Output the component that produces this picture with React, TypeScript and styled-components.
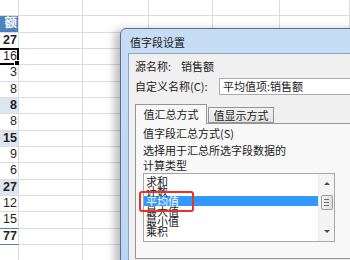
import styled, { createGlobalStyle } from "styled-components";

const GlobalStyle = createGlobalStyle`
  html, body {
    margin: 0;
    padding: 0;
    width: 350px;
    height: 260px;
    overflow: hidden;
    background: #ffffff;
  }
  * {
    box-sizing: border-box;
  }
`;

const Page = styled.div`
  position: relative;
  width: 350px;
  height: 260px;
  overflow: hidden;
  font-family: "Noto Sans CJK SC", "Noto Sans", sans-serif;
`;

const Sheet = styled.div`
  display: flex;
  flex-direction: column;
`;

const SheetRow = styled.div`
  display: grid;
  grid-template-columns: 19px 64px 66px 64px 67px 70px;
  height: 16.33px;
`;

const Cell = styled.div<{ $shade?: boolean; $head?: boolean; $bold?: boolean; $line?: boolean }>`
  position: relative;
  border-right: 1px solid #dadcdf;
  border-bottom: 1px solid ${(p) => (p.$line ? "#4f81bd" : "#dadcdf")};
  background: ${(p) => (p.$head ? "#4f81bd" : p.$shade ? "#dce6f1" : "#ffffff")};
  color: ${(p) => (p.$head ? "#ffffff" : "#1f1f1f")};
  font-family: "Liberation Sans", "Noto Sans CJK SC", sans-serif;
  font-size: 12.5px;
  font-weight: ${(p) => (p.$bold || p.$head ? 700 : 400)};
  line-height: 15px;
  text-align: right;
  padding-right: 1px;
  white-space: nowrap;
  direction: rtl;
`;

const Selection = styled.div`
  position: absolute;
  left: -2px;
  top: -1px;
  right: -1px;
  bottom: -1px;
  border: 2px solid #000000;
  &::after {
    content: "";
    position: absolute;
    right: -4px;
    bottom: -4px;
    width: 5px;
    height: 5px;
    background: #000000;
    border: 1px solid #ffffff;
  }
`;

const Dialog = styled.div`
  position: absolute;
  left: 120px;
  top: 28px;
  width: 250px;
  height: 240px;
  border: 1px solid #5d6f88;
  border-radius: 6px 0 0 0;
  background: linear-gradient(#c7ddf6, #bcd5f2);
  box-shadow: -5px 2px 10px rgba(0, 0, 0, 0.28);
  display: flex;
  flex-direction: column;
`;

const TitleBar = styled.div`
  height: 24px;
  padding-left: 9px;
  font-size: 11px;
  line-height: 26px;
  color: #1b1b1b;
`;

const Body = styled.div`
  flex: 1;
  margin-left: 7px;
  background: #f0f0f0;
  border-top: 1px solid #8ea3bf;
  border-left: 1px solid #8ea3bf;
  padding: 4px 0 0 6px;
  display: flex;
  flex-direction: column;
  font-size: 11px;
  color: #1b1b1b;
`;

const FieldRow = styled.div`
  display: flex;
  align-items: center;
  height: 16px;
  line-height: 16px;
`;

const NameRow = styled.div`
  display: flex;
  align-items: center;
  margin-top: 3px;
  height: 18px;
`;

const Label = styled.span<{ $w?: number }>`
  width: ${(p) => (p.$w ? `${p.$w}px` : "auto")};
  white-space: nowrap;
`;

const TextBox = styled.div`
  flex: 1;
  height: 17px;
  background: #ffffff;
  border: 1px solid #a5acb5;
  padding-left: 3px;
  line-height: 15px;
  white-space: nowrap;
`;

const Tabs = styled.div`
  display: flex;
  align-items: flex-end;
  height: 19px;
  margin-top: 9px;
  position: relative;
  z-index: 1;
`;

const Tab = styled.div<{ $active?: boolean }>`
  height: ${(p) => (p.$active ? "20px" : "16px")};
  width: ${(p) => (p.$active ? "72px" : "66px")};
  margin-left: ${(p) => (p.$active ? "0" : "1px")};
  margin-bottom: ${(p) => (p.$active ? "-1px" : "0")};
  border: 1px solid #959595;
  border-bottom: ${(p) => (p.$active ? "none" : "1px solid #959595")};
  background: ${(p) => (p.$active ? "#f8f8f8" : "linear-gradient(#f2f2f2, #e2e2e2)")};
  text-align: center;
  line-height: ${(p) => (p.$active ? "19px" : "15px")};
`;

const TabPanel = styled.div`
  height: 136px;
  border-top: 1px solid #959595;
  border-left: 1px solid #959595;
  border-bottom: 1px solid #959595;
  background: #f8f8f8;
  padding: 2px 0 0 7px;
  display: flex;
  flex-direction: column;
`;

const Line = styled.div<{ $gap?: number }>`
  line-height: 15px;
  margin-top: ${(p) => p.$gap ?? 0}px;
  white-space: nowrap;
`;

const ListBox = styled.div`
  position: relative;
  width: 192px;
  height: 69px;
  border: 1px solid #a7a7a7;
  background: #ffffff;
  display: flex;
`;

const Items = styled.div`
  flex: 1;
  padding-top: 2px;
  overflow: hidden;
`;

const Item = styled.div<{ $selected?: boolean }>`
  height: 10px;
  line-height: 10px;
  padding-left: 2px;
  white-space: nowrap;
  background: ${(p) => (p.$selected ? "#3399ff" : "transparent")};
  color: ${(p) => (p.$selected ? "#ffffff" : "#1b1b1b")};
`;

const ScrollBar = styled.div`
  width: 16px;
  background: #f4f4f4;
  border-left: 1px solid #ececec;
  display: flex;
  flex-direction: column;
  align-items: center;
`;

const Arrow = styled.div<{ $down?: boolean }>`
  width: 0;
  height: 0;
  margin-top: ${(p) => (p.$down ? "auto" : "8px")};
  margin-bottom: ${(p) => (p.$down ? "8px" : "0")};
  border-left: 3px solid transparent;
  border-right: 3px solid transparent;
  ${(p) => (p.$down ? "border-top: 3px solid #4d4d4d;" : "border-bottom: 3px solid #4d4d4d;")}
`;

const Thumb = styled.div`
  width: 12px;
  height: 15px;
  margin-top: 10px;
  border: 1px solid #9a9a9a;
  border-radius: 2px;
  background: linear-gradient(90deg, #f4f4f4, #dedede);
  display: flex;
  flex-direction: column;
  justify-content: center;
  align-items: center;
  gap: 2px;
  span {
    width: 5px;
    height: 1px;
    background: #6c6c6c;
  }
`;

const Highlight = styled.div`
  position: absolute;
  left: -5px;
  top: 17px;
  width: 55px;
  height: 21px;
  border: 2px solid #e5332a;
  border-radius: 3px;
`;

type RowData = {
  v: string;
  bold?: boolean;
  shade?: boolean;
  head?: boolean;
  sel?: boolean;
  line?: boolean;
};

const rows: RowData[] = [
  { v: "" },
  { v: "额", head: true },
  { v: "27", bold: true },
  { v: "16", sel: true },
  { v: "3" },
  { v: "8" },
  { v: "8", bold: true, shade: true },
  { v: "8" },
  { v: "15", bold: true, shade: true },
  { v: "9" },
  { v: "6" },
  { v: "27", bold: true, shade: true },
  { v: "12" },
  { v: "15", line: true },
  { v: "77", bold: true, line: true },
  { v: "" },
];

const calcTypes = ["求和", "计数", "平均值", "最大值", "最小值", "乘积"];

export default function App() {
  return (
    <Page>
      <GlobalStyle />
      <Sheet>
        {rows.map((r, i) => (
          <SheetRow key={i}>
            <Cell $bold={r.bold} $shade={r.shade} $head={r.head} $line={r.line}>
              {r.v}
              {r.sel && <Selection />}
            </Cell>
            {[0, 1, 2, 3, 4].map((c) => (
              <Cell key={c} />
            ))}
          </SheetRow>
        ))}
      </Sheet>

      <Dialog>
        <TitleBar>值字段设置</TitleBar>
        <Body>
          <FieldRow>
            <Label $w={46}>源名称:</Label>
            <Label>销售额</Label>
          </FieldRow>
          <NameRow>
            <Label $w={84}>自定义名称(C):</Label>
            <TextBox>平均值项:销售额</TextBox>
          </NameRow>
          <Tabs>
            <Tab $active>值汇总方式</Tab>
            <Tab>值显示方式</Tab>
          </Tabs>
          <TabPanel>
            <Line>值字段汇总方式(S)</Line>
            <Line $gap={2}>选择用于汇总所选字段数据的</Line>
            <Line>计算类型</Line>
            <ListBox>
              <Items>
                {calcTypes.map((t) => (
                  <Item key={t} $selected={t === "平均值"}>
                    {t}
                  </Item>
                ))}
              </Items>
              <ScrollBar>
                <Arrow />
                <Thumb>
                  <span />
                  <span />
                  <span />
                </Thumb>
                <Arrow $down />
              </ScrollBar>
              <Highlight />
            </ListBox>
          </TabPanel>
        </Body>
      </Dialog>
    </Page>
  );
}
